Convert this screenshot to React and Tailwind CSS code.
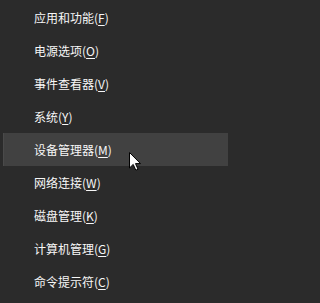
import React from "react";

const items = [
  ["应用和功能", "F"],
  ["电源选项", "O"],
  ["事件查看器", "V"],
  ["系统", "Y"],
  ["设备管理器", "M"],
  ["网络连接", "W"],
  ["磁盘管理", "K"],
  ["计算机管理", "G"],
  ["命令提示符", "C"],
];

export default function App() {
  return (
    <div
      className="w-full min-h-screen bg-[#2b2b2b]"
      style={{ fontFamily: '"Microsoft YaHei", "Noto Sans CJK SC", sans-serif' }}
    >
      <div className="relative w-[231px] h-[303px] pt-[1px] overflow-hidden">
        {items.map(([label, key], i) => (
          <div
            key={label}
            className={
              "h-[33px] mx-[3px] flex items-center pl-[31px] text-[12px] text-[#f7f7f7] " +
              (i === 4 ? "bg-[#414141] border-l border-[#4a4a4a]" : "")
            }
          >
            <span className={i === 4 ? "-ml-px" : ""}>
              {label}(<span className="underline underline-offset-2">{key}</span>)
            </span>
          </div>
        ))}
        <svg
          className="absolute left-[129px] top-[152px]"
          width="13"
          height="19"
          viewBox="0 0 13 19"
        >
          <path
            d="M0.5 0.5 L0.5 16 L4.2 12.4 L6.8 18.2 L9 17.2 L6.5 11.6 L11.5 11.6 Z"
            fill="#ffffff"
            stroke="#000000"
            strokeWidth="1"
            strokeLinejoin="miter"
          />
        </svg>
      </div>
    </div>
  );
}
